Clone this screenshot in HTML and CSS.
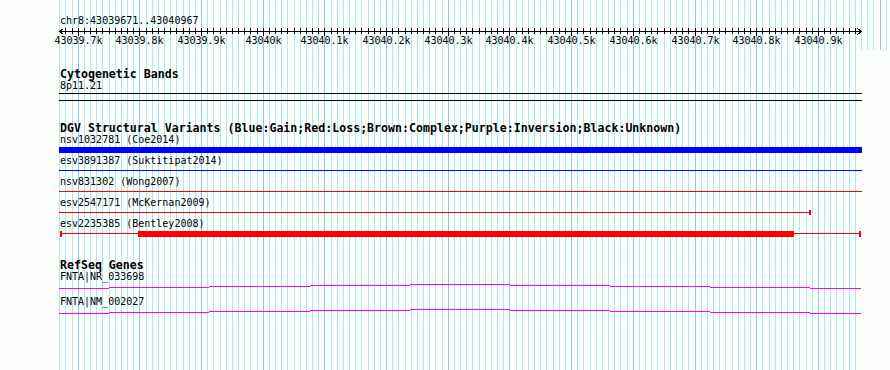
FILE: index.html
```html
<!DOCTYPE html>
<html lang="en">
<head>
    <meta charset="UTF-8">
    <meta name="viewport" content="width=device-width, initial-scale=1.0">
    <title>chr8:43039671..43040967</title>
    <link rel="stylesheet" href="styles.css">
</head>
<body>
    <div class="browser">
        <svg class="grid" id="grid" width="890" height="370"></svg>

        <div class="ruler">
            <div class="location">chr8:43039671..43040967</div>
            <svg class="scale" id="scale" width="890" height="23">
                <line x1="59" y1="4.5" x2="862" y2="4.5" stroke="#000"/>
                <path d="M63.5 1.5 L59.5 4.5 L63.5 7.5" fill="none" stroke="#000"/>
                <path d="M857.5 1.5 L861.5 4.5 L857.5 7.5" fill="none" stroke="#000"/>
            </svg>
        </div>

        <div class="track cyto">
            <div class="track-title">Cytogenetic Bands</div>
            <div class="feature-label">8p11.21</div>
            <svg class="glyph" width="890" height="9">
                <rect x="59" y="1" width="803" height="1" fill="#000"/>
                <rect x="59" y="8" width="803" height="1" fill="#000"/>
            </svg>
        </div>

        <div class="track dgv">
            <div class="track-title">DGV Structural Variants (Blue:Gain;Red:Loss;Brown:Complex;Purple:Inversion;Black:Unknown)</div>

            <div class="feature-label">nsv1032781 (Coe2014)</div>
            <svg class="glyph" width="890" height="9">
                <rect x="59" y="1" width="803" height="6" fill="#0000ff"/>
            </svg>

            <div class="feature-label">esv3891387 (Suktitipat2014)</div>
            <svg class="glyph" width="890" height="9">
                <rect x="59" y="3" width="803" height="1" fill="#0000ff"/>
            </svg>

            <div class="feature-label">nsv831302 (Wong2007)</div>
            <svg class="glyph" width="890" height="9">
                <rect x="59" y="3" width="803" height="1" fill="#ff0000"/>
            </svg>

            <div class="feature-label">esv2547171 (McKernan2009)</div>
            <svg class="glyph" width="890" height="9">
                <rect x="59" y="3" width="750" height="1" fill="#ff0000"/>
                <rect x="809" y="1" width="2" height="5" fill="#ff0000"/>
            </svg>

            <div class="feature-label">esv2235385 (Bentley2008)</div>
            <svg class="glyph" width="890" height="9">
                <rect x="60" y="1" width="2" height="6" fill="#ff0000"/>
                <rect x="62" y="3" width="797" height="1" fill="#ff0000"/>
                <rect x="138" y="1" width="656" height="6" fill="#ff0000"/>
                <rect x="859" y="1" width="2" height="6" fill="#ff0000"/>
            </svg>
        </div>

        <div class="track refseq">
            <div class="track-title">RefSeq Genes</div>

            <div class="feature-label">FNTA|NR_033698</div>
            <svg class="glyph gene" width="890" height="13">
                <rect x="59" y="5" width="50" height="1"/>
                <rect x="109" y="4" width="100" height="1"/>
                <rect x="209" y="3" width="101" height="1"/>
                <rect x="310" y="2" width="100" height="1"/>
                <rect x="410" y="1" width="100" height="1"/>
                <rect x="510" y="2" width="100" height="1"/>
                <rect x="610" y="3" width="100" height="1"/>
                <rect x="710" y="4" width="100" height="1"/>
                <rect x="810" y="5" width="51" height="1"/>
            </svg>

            <div class="feature-label">FNTA|NM_002027</div>
            <svg class="glyph gene" width="890" height="13">
                <rect x="59" y="5" width="50" height="1"/>
                <rect x="109" y="4" width="100" height="1"/>
                <rect x="209" y="3" width="101" height="1"/>
                <rect x="310" y="2" width="100" height="1"/>
                <rect x="410" y="1" width="100" height="1"/>
                <rect x="510" y="2" width="100" height="1"/>
                <rect x="610" y="3" width="100" height="1"/>
                <rect x="710" y="4" width="100" height="1"/>
                <rect x="810" y="5" width="51" height="1"/>
            </svg>
        </div>
    </div>

    <script>
        document.addEventListener('DOMContentLoaded', function() {
            const svgNS = 'http://www.w3.org/2000/svg';
            const grid = document.getElementById('grid');
            const scale = document.getElementById('scale');

            // one grid step = 10 bp, tick 0 sits on 43039700
            const startBp = 43039700;
            const originX = 78.33;
            const step = 6.1667;

            function tickX(k) {
                return Math.floor(originX + k * step) + 0.5;
            }

            function addLine(parent, x, y1, y2, cls) {
                const el = document.createElementNS(svgNS, 'line');
                el.setAttribute('x1', x);
                el.setAttribute('x2', x);
                el.setAttribute('y1', y1);
                el.setAttribute('y2', y2);
                el.setAttribute('class', cls);
                parent.appendChild(el);
            }

            // background grid (ruler panel is a bit wider than the tracks)
            for (let k = -3; k <= 131; k++) {
                const major = k % 10 === 0;
                const bottom = k <= 126 ? 370 : 50;
                addLine(grid, tickX(k), 0, bottom, major ? 'major' : 'minor');
            }

            // ruler ticks and labels
            for (let k = -2; k <= 126; k++) {
                const major = k % 10 === 0;
                addLine(scale, tickX(k), 1, major ? 9 : 7, 'tick');

                if (major && k >= 0) {
                    const label = document.createElementNS(svgNS, 'text');
                    label.setAttribute('x', tickX(k));
                    label.setAttribute('y', 17);
                    label.setAttribute('class', 'tick-label');
                    label.textContent = ((startBp + k * 10) / 1000) + 'k';
                    scale.appendChild(label);
                }
            }
        });
    </script>
</body>
</html>
```

FILE: styles.css
```css
body {
    margin: 0;
    background-color: #fcfefc;
    font-family: 'DejaVu Sans Mono', 'Liberation Mono', monospace;
    font-size: 10px;
    color: #000;
}

.browser {
    position: relative;
    width: 890px;
    height: 370px;
    overflow: hidden;
    isolation: isolate;
}

.grid {
    position: absolute;
    top: 0;
    left: 0;
    z-index: -1;
    shape-rendering: crispEdges;
}

.grid .minor {
    stroke: #a9ecec;
    stroke-width: 1;
}

.grid .major {
    stroke: #8cc8ea;
    stroke-width: 1;
}

.ruler {
    padding-top: 15px;
}

.location {
    padding-left: 60px;
    line-height: 12px;
    height: 12px;
}

.scale {
    display: block;
    shape-rendering: crispEdges;
}

.scale .tick {
    stroke: #000;
    stroke-width: 1;
}

.tick-label {
    font-family: 'DejaVu Sans Mono', monospace;
    font-size: 10px;
    text-anchor: middle;
    fill: #000;
}

.track-title {
    padding-left: 60px;
    font-size: 11.6px;
    font-weight: bold;
    line-height: 12px;
    height: 12px;
    white-space: nowrap;
}

.feature-label {
    padding-left: 60px;
    line-height: 12px;
    height: 12px;
    white-space: nowrap;
}

.glyph {
    display: block;
    shape-rendering: crispEdges;
}

.gene rect {
    fill: #ff00ff;
}

.cyto {
    margin-top: 18px;
}

.dgv {
    margin-top: 21px;
}

.refseq {
    margin-top: 20px;
}
```
